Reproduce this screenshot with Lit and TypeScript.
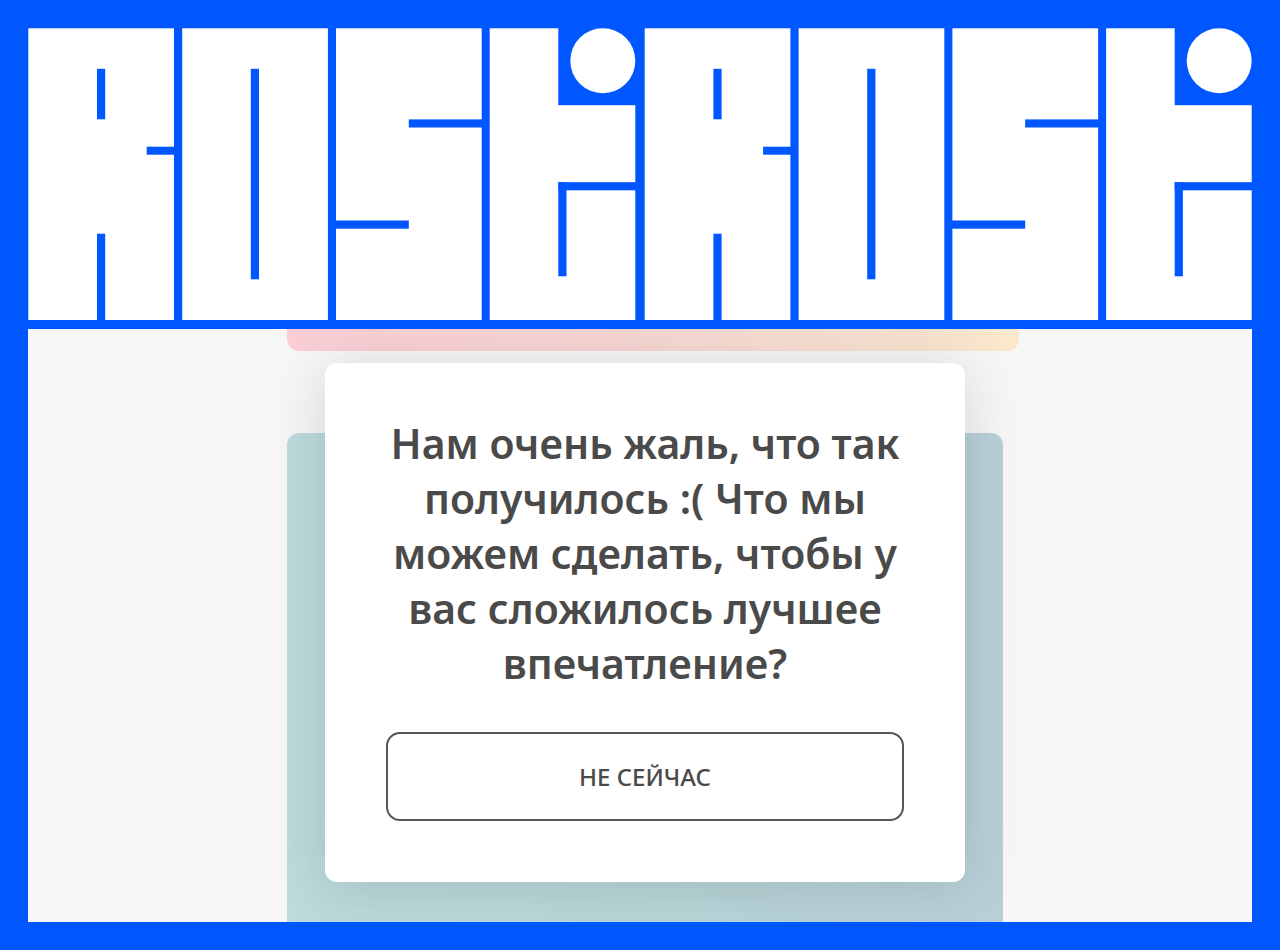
import { LitElement, css, html, svg } from "lit";
import { customElement, state } from "lit/decorators.js";

/** Brand mark: solid blocks with narrow slots, repeated twice across the header. */
@customElement("brand-mark")
export class BrandMark extends LitElement {
  static styles = css`
    :host {
      display: block;
    }
    .mark {
      display: block;
      width: 100%;
      height: auto;
    }
    .block {
      fill: #fff;
    }
    .slot {
      fill: #0057ff;
    }
  `;

  private unit(offset: number) {
    return svg`
      <g transform="translate(${offset} 0)">
        <rect class="block" x="0.3" y="0.3" width="145.7" height="291.7" />
        <rect class="slot" x="69" y="40.8" width="8.2" height="50.5" />
        <rect class="slot" x="69" y="205.7" width="8.2" height="86.3" />
        <rect class="slot" x="118.7" y="118.7" width="29" height="8" />

        <rect class="block" x="154.2" y="0.3" width="145.7" height="291.7" />
        <rect class="slot" x="222.8" y="40.8" width="8.2" height="210.5" />

        <rect class="block" x="308" y="0.3" width="145.7" height="291.7" />
        <rect class="slot" x="380.8" y="91.4" width="74" height="8.1" />
        <rect class="slot" x="307" y="192.5" width="73.8" height="8.2" />

        <rect class="block" x="461.7" y="0.3" width="145.6" height="291.7" />
        <rect class="slot" x="530.3" y="0" width="78" height="77.2" />
        <circle class="block" cx="574.8" cy="32.7" r="32.5" />
        <rect class="slot" x="530.3" y="154.2" width="78" height="8.1" />
        <rect class="slot" x="530.3" y="154.2" width="8.2" height="94.1" />
      </g>
    `;
  }

  render() {
    return html`
      <svg class="mark" viewBox="0 0 1224 292" role="img" aria-label="Rosti Rosti">
        ${this.unit(0)} ${this.unit(616.4)}
      </svg>
    `;
  }
}

@customElement("app-root")
export class AppRoot extends LitElement {
  static styles = css`
    :host {
      display: block;
    }
    .page {
      box-sizing: border-box;
      min-height: 100vh;
      padding: 28px;
      display: flex;
      flex-direction: column;
      gap: 9px;
      background: #0057ff;
      font-family: "Noto Sans", "Open Sans", sans-serif;
      color: #4a4a4a;
    }
    .stage {
      flex: 1;
      display: grid;
      grid-template-columns: minmax(0, 259fr) minmax(0, 716fr) minmax(0, 249fr);
      overflow: hidden;
      background: #f7f7f7;
    }
    .cards {
      grid-area: 1 / 2;
      display: flex;
      flex-direction: column;
      gap: 82px;
    }
    .card-warm {
      height: 22px;
      margin-right: -16px;
      border-radius: 0 0 12px 12px;
      background: linear-gradient(90deg, #fbced6, #f7d6d3 45%, #f8e0d2 75%, #fbe8cc);
    }
    .card-cool {
      flex: 1;
      border-radius: 12px 12px 0 0;
      background: linear-gradient(90deg, #bcdcdd, #b9d8da 50%, #b9d0d9);
    }
    .dialog {
      grid-area: 1 / 2;
      align-self: start;
      box-sizing: border-box;
      margin: 34px 38px 39px;
      padding: 53px 61px 61px;
      display: flex;
      flex-direction: column;
      gap: 41px;
      border-radius: 12px;
      background: #fff;
      box-shadow: 0 6px 60px rgba(60, 60, 60, 0.19);
    }
    .question {
      margin: 0;
      font-size: 41px;
      font-weight: 600;
      line-height: 55px;
      text-align: center;
    }
    .line {
      display: block;
    }
    .later {
      height: 89px;
      padding: 0;
      border: 2px solid #555;
      border-radius: 14px;
      background: #fff;
      color: inherit;
      font: 500 24px/32px "Noto Sans", "Open Sans", sans-serif;
      cursor: pointer;
    }
  `;

  @state() private open = true;

  private lines = [
    "Нам очень жаль, что так",
    "получилось :( Что мы",
    "можем сделать, чтобы у",
    "вас сложилось лучшее",
    "впечатление?",
  ];

  private dismiss() {
    this.open = false;
  }

  render() {
    return html`
      <div class="page">
        <brand-mark></brand-mark>
        <main class="stage">
          <div class="cards">
            <div class="card-warm"></div>
            <div class="card-cool"></div>
          </div>
          ${this.open
            ? html`
                <section class="dialog" role="dialog" aria-labelledby="question">
                  <h1 class="question" id="question">
                    ${this.lines.map((line) => html`<span class="line">${line} </span>`)}
                  </h1>
                  <button class="later" type="button" @click=${this.dismiss}>НЕ СЕЙЧАС</button>
                </section>
              `
            : null}
        </main>
      </div>
    `;
  }
}
